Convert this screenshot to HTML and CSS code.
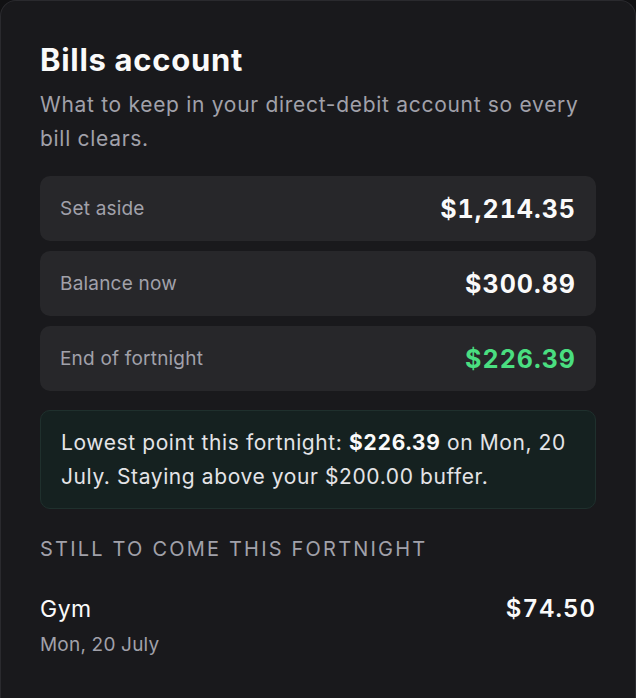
FILE: index.html
```html
<!DOCTYPE html>
<html>
	<head>
		<meta charset="utf-8" />
		<title>Bills account</title>
		<link rel="stylesheet" href="styles.css">
	</head>
	<body>
		<div class="card">
			<h1 class="title">Bills account</h1>
			<p class="sub">What to keep in your direct-debit account so every bill clears.</p>
			<ul class="stats">
				<li><span class="label">Set aside</span><span class="val">$1,214.35</span></li>
				<li><span class="label">Balance now</span><span class="val">$300.89</span></li>
				<li><span class="label">End of fortnight</span><span class="val good">$226.39</span></li>
			</ul>
			<div class="note">Lowest point this fortnight: <b>$226.39</b> on Mon, 20 July. Staying above your $200.00 buffer.</div>
			<h2 class="section">Still to come this fortnight</h2>
			<ul class="bills">
				<li>
					<div class="bill_info">
						<span class="bill_name">Gym</span>
						<span class="bill_date">Mon, 20 July</span>
					</div>
					<span class="bill_amt">$74.50</span>
				</li>
			</ul>
		</div>
	</body>
</html>
```

FILE: styles.css
```css
*{margin: 0;padding: 0;list-style: none;box-sizing: border-box;}
body{background: #111113;font-family: Inter, "Noto Sans", sans-serif;color: #f4f4f5;}
.card{width: 636px;min-height: 698px;background: #19191c;border: 1px solid #2a2a2e;border-bottom: none;border-radius: 16px 16px 0 0;padding: 39px 39px 40px;}
.title{font-size: 31px;font-weight: 700;line-height: 40px;letter-spacing: 0.7px;color: #fafafa;}
.sub{margin-top: 8px;font-size: 21px;line-height: 34px;letter-spacing: 0.7px;color: #a1a1aa;}
.stats{margin-top: 20px;display: flex;flex-direction: column;gap: 10px;}
.stats > li{display: flex;justify-content: space-between;align-items: center;height: 65px;padding: 0 20px;background: #27272a;border-radius: 10px;}
.stats .label{font-size: 19px;letter-spacing: 0.2px;color: #a1a1aa;}
.stats .val{font-size: 25px;font-weight: 700;color: #fafafa;letter-spacing: 1px;font-variant-numeric: tabular-nums;}
.stats .val.good{color: #4ade80;}
.note{margin-top: 19px;padding: 15px 20px 14px;background: #152120;border: 1px solid #1f302d;border-radius: 10px;font-size: 21px;line-height: 34px;letter-spacing: 0.6px;color: #e4e4e7;}
.note b{font-weight: 700;color: #fafafa;font-variant-numeric: tabular-nums;}
.section{margin-top: 27px;font-size: 20px;font-weight: 400;text-transform: uppercase;letter-spacing: 2.2px;color: #a1a1aa;line-height: 26px;}
.bills{margin-top: 30px;}
.bills > li{display: flex;justify-content: space-between;align-items: flex-start;}
.bill_info{display: flex;flex-direction: column;}
.bill_name{font-size: 23px;line-height: 34px;letter-spacing: 0.5px;color: #fafafa;}
.bill_date{margin-top: 6px;font-size: 19px;line-height: 26px;letter-spacing: 0.2px;color: #a1a1aa;}
.bill_amt{font-size: 24px;font-weight: 600;line-height: 34px;color: #fafafa;letter-spacing: 1px;font-variant-numeric: tabular-nums;}
```
